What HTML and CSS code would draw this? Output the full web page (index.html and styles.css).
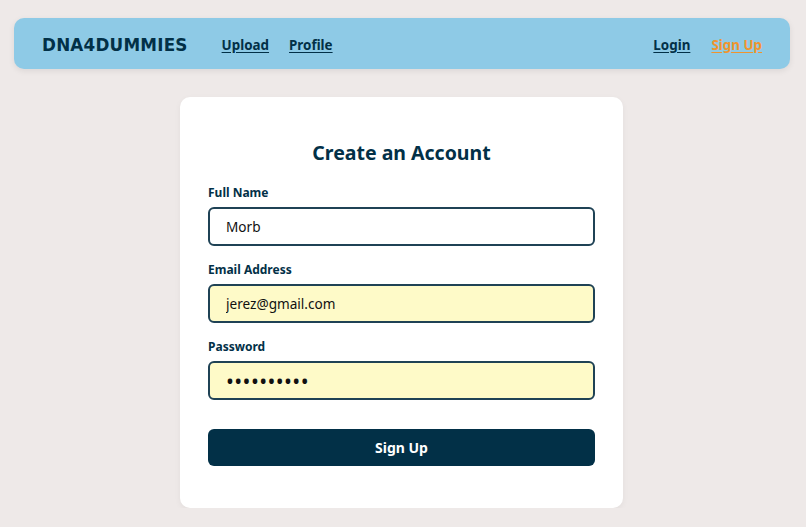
FILE: index.html
```html
<!DOCTYPE html>
<html lang="en">
<head>
<meta charset="utf-8">
<title>DNA4DUMMIES - Sign Up</title>
<link rel="stylesheet" href="styles.css">
</head>
<body>
<nav class="navbar">
  <div class="nav-left">
    <span class="logo">DNA4DUMMIES</span>
    <a class="nav-link" href="#">Upload</a>
    <a class="nav-link" href="#">Profile</a>
  </div>
  <div class="nav-right">
    <a class="nav-link" href="#">Login</a>
    <a class="nav-link active" href="#">Sign Up</a>
  </div>
</nav>
<main class="page">
  <form class="card">
    <h1 class="title">Create an Account</h1>
    <label class="label" for="name">Full Name</label>
    <input class="input" id="name" type="text" value="Morb">
    <label class="label" for="email">Email Address</label>
    <input class="input filled" id="email" type="email" value="jerez@gmail.com">
    <label class="label" for="pw">Password</label>
    <input class="input filled pw" id="pw" type="password" value="abcdefghij">
    <button class="btn" type="button">Sign Up</button>
  </form>
</main>
</body>
</html>
```
FILE: styles.css
```css
* { box-sizing: border-box; }
html, body { margin: 0; padding: 0; }
body {
  background: #eee9e8;
  font-family: "Noto Sans", "Open Sans", sans-serif;
  color: #023047;
  padding: 18px 16px 0 14px;
}
.navbar {
  display: flex;
  justify-content: space-between;
  align-items: center;
  height: 51px;
  padding: 2px 28px 0;
  background: #8ecae6;
  border-radius: 10px;
  box-shadow: 0 2px 6px rgba(0,0,0,0.08);
}
.nav-left, .nav-right {
  display: flex;
  align-items: center;
}
.logo {
  font-family: "DejaVu Sans", Verdana, sans-serif;
  font-weight: bold;
  font-size: 16.8px;
  letter-spacing: 0.2px;
  color: #023047;
  margin-right: 34px;
}
.nav-left .nav-link { margin-right: 20px; }
.nav-right .nav-link { margin-left: 21px; }
.nav-link {
  color: #023047;
  font-weight: bold;
  font-size: 13.4px;
  text-decoration: underline;
  text-underline-offset: 2px;
}
.nav-link.active { color: #f0942e; }
.page {
  display: flex;
  justify-content: center;
  padding-top: 28px;
  padding-right: 1px;
}
.card {
  width: 443px;
  background: #fff;
  border-radius: 10px;
  padding: 41px 28px 42px;
  display: flex;
  flex-direction: column;
  box-shadow: 0 2px 6px rgba(0,0,0,0.05);
}
.title {
  margin: 0 0 16px;
  text-align: center;
  font-size: 19.5px;
  line-height: 30px;
  font-weight: bold;
  color: #023047;
}
.label {
  font-size: 12px;
  font-weight: bold;
  line-height: 18px;
  margin-bottom: 5px;
  color: #023047;
}
.input {
  height: 39px;
  border: 2px solid #1f4255;
  border-radius: 6px;
  padding: 0 16px;
  font-family: "Noto Sans", "Open Sans", sans-serif;
  font-size: 13.6px;
  color: #111;
  background: #fff;
  margin-bottom: 15px;
  outline: none;
}
.input.filled { background: #fefac8; }
.input.pw { font-size: 21px; letter-spacing: 0.4px; }
.btn {
  margin-top: 14px;
  height: 37px;
  border: none;
  border-radius: 6px;
  background: #023047;
  color: #fff;
  font-family: "Noto Sans", "Open Sans", sans-serif;
  font-weight: bold;
  font-size: 14px;
}
```
